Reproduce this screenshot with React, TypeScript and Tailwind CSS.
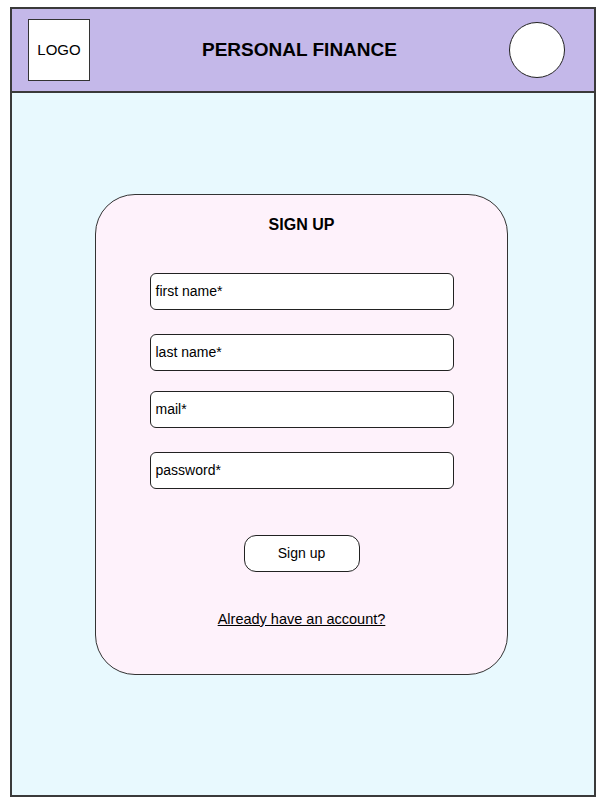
import React from "react";

const FIELDS = ["first name*", "last name*", "mail*", "password*"];
const GAPS = ["mt-[38px]", "mt-[24px]", "mt-[20px]", "mt-[24px]"];

export default function App() {
  return (
    <div className="min-h-[802px] bg-white pl-[10px] pt-[7px] font-['Liberation_Sans',Arial,sans-serif] text-black">
      <div className="flex h-[790px] w-[586px] flex-col border-2 border-[#3a3a3a] bg-[#e8f9fe]">
        <header className="flex h-[84px] shrink-0 items-center justify-between border-b-2 border-[#3a3a3a] bg-[#c4b8e9] pl-[16px] pr-[29px]">
          <div className="flex h-[62px] w-[62px] items-center justify-center border-[1.5px] border-[#333] bg-white text-[15px]">LOGO</div>
          <h1 className="text-[19px] font-bold">PERSONAL FINANCE</h1>
          <div className="h-[56px] w-[56px] rounded-full border-[1.5px] border-[#222] bg-white" />
        </header>
        <main className="flex-1 pt-[101px]">
          <div className="ml-[83px] flex h-[481px] w-[413px] flex-col items-center rounded-[40px] border-[1.5px] border-[#333] bg-[#fef2fb] pt-[20px]">
            <h2 className="text-[16px] font-bold leading-[20px]">SIGN UP</h2>
            {FIELDS.map((f, i) => (
              <div key={f} className={`${GAPS[i]} flex h-[37px] w-[304px] items-center rounded-[6px] border-[1.5px] border-[#222] bg-white px-[5px] text-[14px]`}>
                {f}
              </div>
            ))}
            <button className="mt-[46px] h-[37px] w-[116px] rounded-[12px] border-[1.5px] border-[#222] bg-white text-[14px]">Sign up</button>
            <a className="mt-[37px] text-[14.5px] underline">Already have an account?</a>
          </div>
        </main>
      </div>
    </div>
  );
}
